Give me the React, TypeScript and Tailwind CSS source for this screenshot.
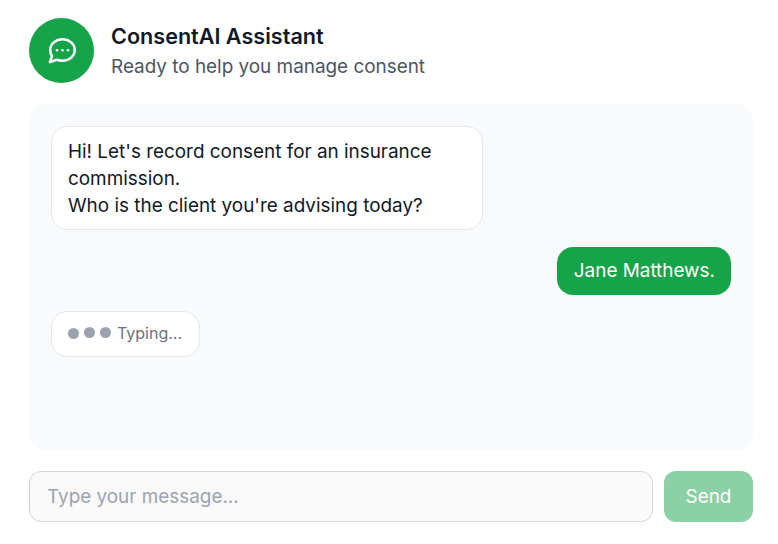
function ChatIcon() {
  return (
    <svg width="28" height="26" viewBox="0 0 28 26" fill="none" stroke="white" strokeWidth="2.5" strokeLinejoin="round">
      <path d="M14.5 1.2C21.3 1.2 26.8 6 26.8 12S21.3 22.8 14.5 22.8C12.5 22.8 10.7 22.4 9 21.7L2 24L4 18C2.8 16.3 2.2 14.2 2.2 12C2.2 6 7.7 1.2 14.5 1.2Z" />
      <circle cx="9" cy="12.2" r="1.3" fill="white" stroke="none" />
      <circle cx="14.5" cy="12.2" r="1.3" fill="white" stroke="none" />
      <circle cx="20" cy="12.2" r="1.3" fill="white" stroke="none" />
    </svg>
  );
}

export default function App() {
  return (
    <div className="w-[778px] h-[544px] bg-white px-[29px] pt-[18px] font-['Inter',sans-serif] overflow-hidden">
      {/* Header */}
      <div className="flex items-center gap-[16px] h-[65px]">
        <div className="w-[65px] h-[65px] rounded-full bg-[#16a34a] flex items-center justify-center">
          <ChatIcon />
        </div>
        <div className="pl-px">
          <div className="text-[21.6px] leading-[30px] font-semibold text-[#111827]">ConsentAI Assistant</div>
          <div className="mt-[2px] text-[18.9px] leading-[28px] text-[#4b5563]">Ready to help you manage consent</div>
        </div>
      </div>

      {/* Messages */}
      <div className="mt-[21px] h-[346px] w-[724px] rounded-2xl bg-[#f9fafb] p-[22px] flex flex-col">
        <div className="w-[432px] rounded-2xl border border-[#e5e7eb] bg-white px-4 pt-[11px] pb-[10px] text-[18.9px] leading-[27px] text-[#111827]">
          Hi! Let's record consent for an insurance commission.
          <br />
          Who is the client you're advising today?
        </div>
        <div className="mt-[17px] self-end rounded-2xl bg-[#16a34a] pl-[17px] pr-4 py-[10px] text-[18.9px] leading-7 text-white">
          Jane Matthews.
        </div>
        <div className="mt-4 self-start flex items-center rounded-2xl border border-[#e5e7eb] bg-white pl-4 pr-[17px] h-[46px]">
          <span className="w-[11px] h-[11px] rounded-full bg-[#9ca3af] mb-[1px]" />
          <span className="ml-[5px] w-[11px] h-[11px] rounded-full bg-[#9ca3af] mb-[3px]" />
          <span className="ml-[5px] w-[11px] h-[11px] rounded-full bg-[#9ca3af] mb-[4px]" />
          <span className="ml-[6px] mb-[2px] text-[16px] text-[#6b7280]">Typing...</span>
        </div>
      </div>

      {/* Input */}
      <div className="mt-[21px] flex gap-[11px] w-[724px]">
        <input
          placeholder="Type your message..."
          className="flex-1 h-[51px] rounded-xl border border-[#d1d5db] bg-[#fafafa] pl-[17px] pr-4 pb-[1px] text-[18.9px] placeholder:text-[#9ca3af]"
        />
        <button className="w-[89px] h-[51px] rounded-xl bg-[#8bd1a5] pt-[2px] text-[18.9px] text-white">Send</button>
      </div>
    </div>
  );
}
